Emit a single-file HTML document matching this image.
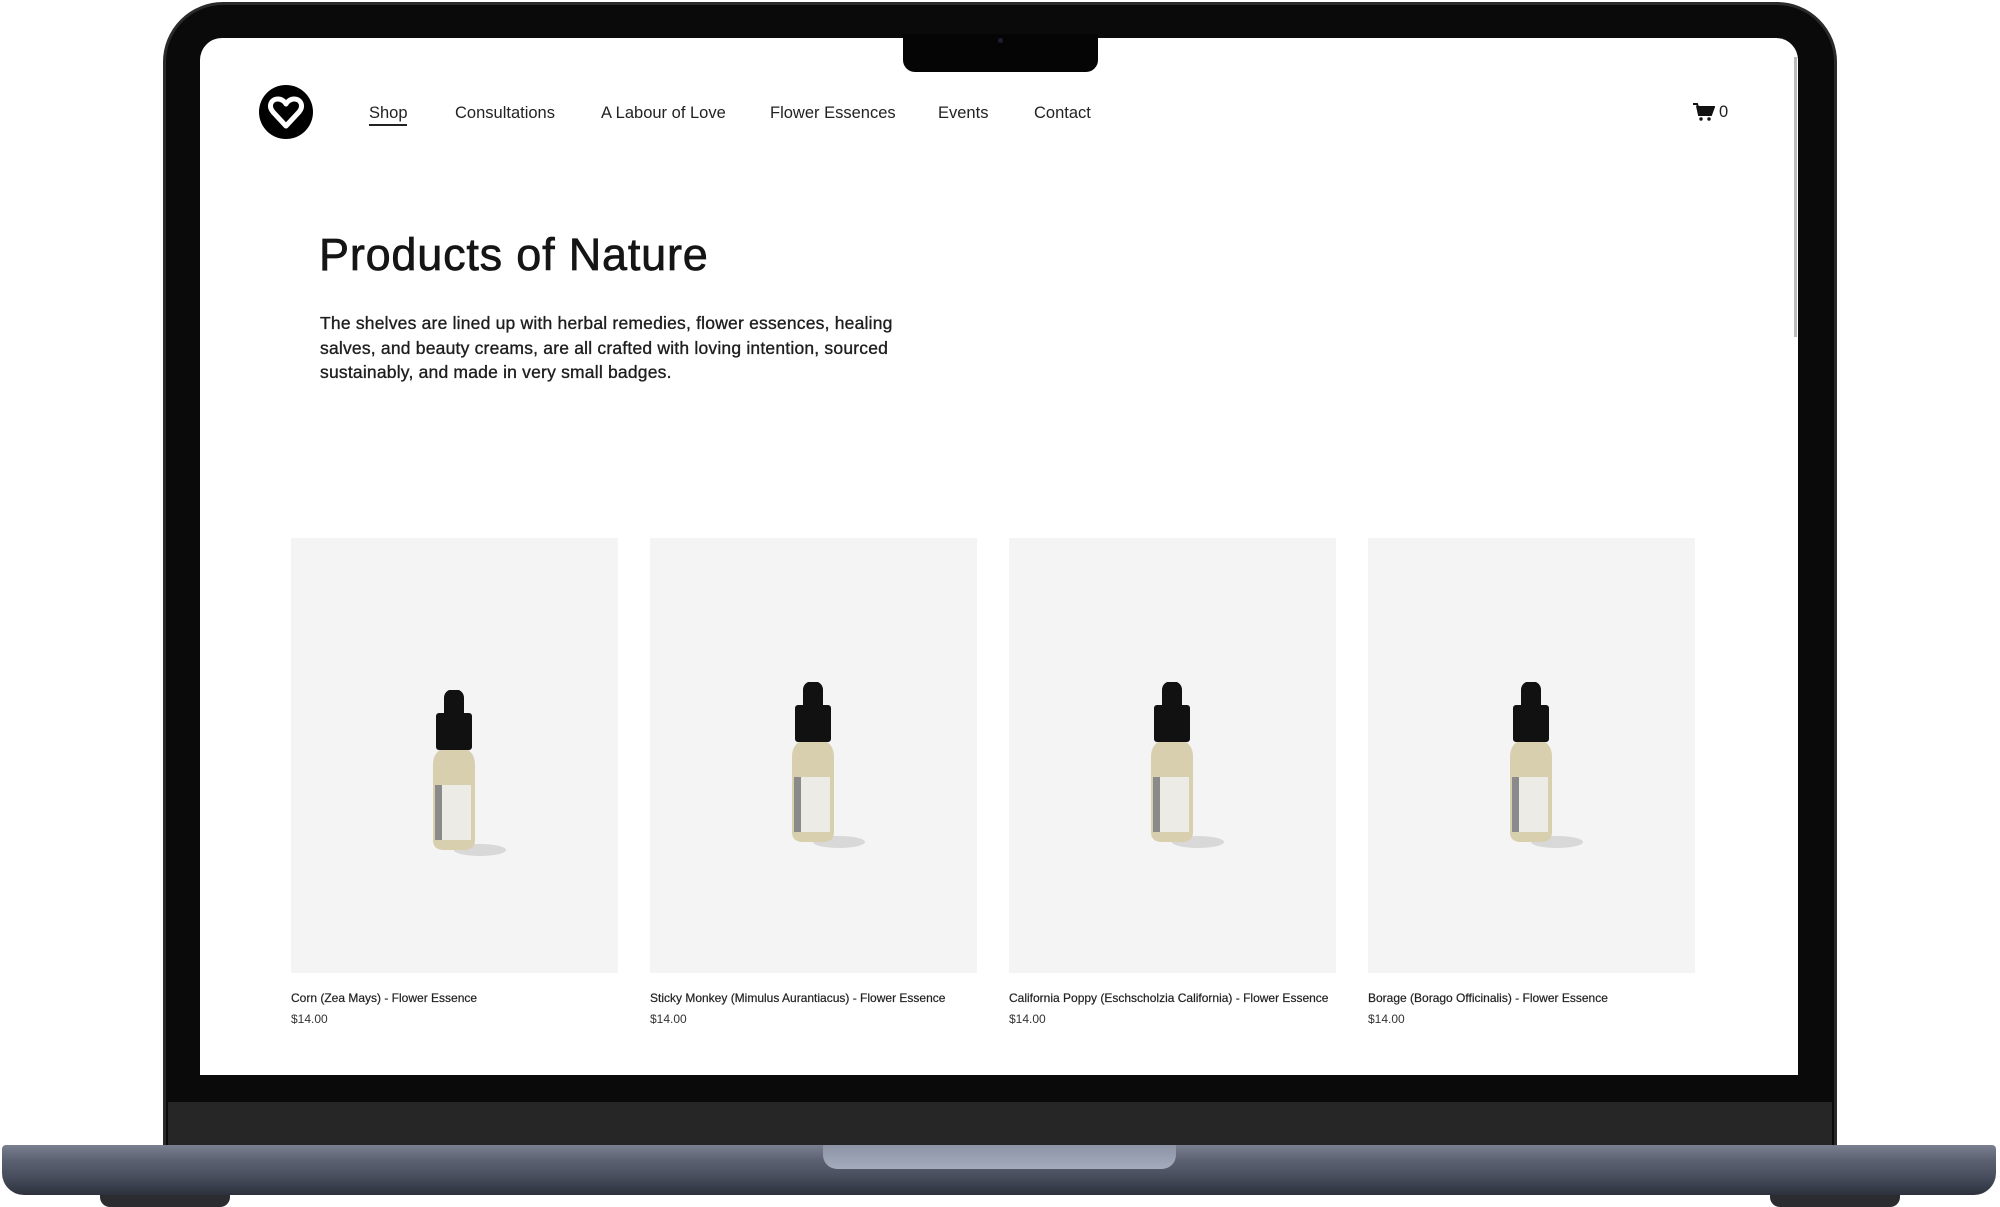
<!DOCTYPE html>
<html><head><meta charset="utf-8"><style>
*{margin:0;padding:0;box-sizing:border-box}
body{width:2000px;height:1207px;background:#fff;position:relative;overflow:hidden;font-family:"Liberation Sans",sans-serif;color:#1a1a1a}
.abs{position:absolute}
.lid{left:163px;top:2px;width:1674px;height:1150px;background:#0a0a0a;border-radius:60px 60px 0 0;border:3px solid #2a2a2a}
.chin{left:168px;top:1102px;width:1664px;height:44px;background:#262626}
.screen{left:200px;top:38px;width:1598px;height:1037px;background:#fff;border-radius:22px 22px 0 0;overflow:hidden}
.notch{left:903px;top:34px;width:195px;height:38px;background:#050505;border-radius:0 0 12px 12px}
.base{left:2px;top:1145px;width:1994px;height:50px;border-radius:4px 4px 22px 22px;background:linear-gradient(#7a8090 0%,#5c6272 30%,#4a5060 60%,#2d313d 100%)}
.thumb{left:823px;top:1145px;width:353px;height:24px;background:linear-gradient(#8c94a6,#a3abbc);border-radius:0 0 14px 14px}
.foot{top:1195px;width:130px;height:12px;background:#2a2c30;border-radius:0 0 10px 10px}
.nav{top:104px;font-size:16.5px;color:#222}
.card{top:538px;width:327px;height:435px;background:#f4f4f4}
.t{font-size:12px;color:#222;top:991px;-webkit-text-stroke:0.2px #222}
.p{font-size:12px;color:#333;top:1012px}
</style></head><body>
<div class="abs lid"></div>
<div class="abs chin"></div>
<div class="abs screen"></div>
<div class="abs notch"><div class="abs" style="left:95px;top:4px;width:5px;height:5px;border-radius:50%;background:#1a2030"></div></div>
<div class="abs" style="left:1794px;top:57px;width:3px;height:280px;background:#bbb"></div>

<svg class="abs" style="left:259px;top:85px" width="54" height="54" viewBox="0 0 54 54"><circle cx="27" cy="27" r="27" fill="#000"/><path d="M27 41 L14 27 C9 21 12 14 19 14 C23 14 26 17 27 19 C28 17 31 14 35 14 C42 14 45 21 40 27 Z" fill="none" stroke="#fff" stroke-width="5" stroke-linejoin="round"/></svg>

<div class="abs nav" style="left:369px">Shop</div>
<div class="abs" style="left:369px;top:124px;width:38px;height:1.5px;background:#222"></div>
<div class="abs nav" style="left:455px">Consultations</div>
<div class="abs nav" style="left:601px">A Labour of Love</div>
<div class="abs nav" style="left:770px">Flower Essences</div>
<div class="abs nav" style="left:938px">Events</div>
<div class="abs nav" style="left:1034px">Contact</div>
<svg class="abs" style="left:1693px;top:103px" width="22" height="18" viewBox="0 0 22 18"><path d="M0 1 H4 L5 4 H21 L18 12 H6 L4 3" fill="none" stroke="#111" stroke-width="2"/><path d="M5 4 H21 L18 12 H7 Z" fill="#111"/><circle cx="8" cy="16" r="1.7" fill="#111"/><circle cx="16" cy="16" r="1.7" fill="#111"/></svg>
<div class="abs nav" style="left:1719px;top:103px">0</div>

<div class="abs" style="left:319px;top:229px;font-size:45px;letter-spacing:0.8px;color:#151515;-webkit-text-stroke:0.7px #151515">Products of Nature</div>
<div class="abs" style="left:320px;top:311px;width:640px;font-size:17.5px;line-height:24.5px;color:#1e1e1e;letter-spacing:0.2px;-webkit-text-stroke:0.35px #1e1e1e">The shelves are lined up with herbal remedies, flower essences, healing<br>salves, and beauty creams, are all crafted with loving intention, sourced<br>sustainably, and made in very small badges.</div>

<div class="abs card" style="left:291px"></div>
<div class="abs card" style="left:650px"></div>
<div class="abs card" style="left:1009px"></div>
<div class="abs card" style="left:1368px"></div>

<svg width="0" height="0" style="position:absolute"><defs>
<g id="b">
<ellipse cx="26" cy="160" rx="26" ry="6" fill="#d8d8d8"/>
<path d="M-14 60 H14 C20 64 21 70 21 76 V150 C21 157 17 160 10 160 H-10 C-17 160 -21 157 -21 150 V76 C-21 70 -20 64 -14 60 Z" fill="#d7cfae"/>
<rect x="-19" y="95" width="36" height="55" fill="#ecebe6"/>
<rect x="-19" y="95" width="7" height="55" fill="#8a8a8a"/>
<rect x="-18" y="23" width="36" height="37" rx="3" fill="#111"/>
<path d="M-10 23 V8 C-10 -4 10 -4 10 8 V23 Z" fill="#111"/>
</g></defs></svg>
<svg class="abs" style="left:394px;top:690px" width="120" height="170" viewBox="-60 0 120 170"><use href="#b"/></svg>
<svg class="abs" style="left:753px;top:682px" width="120" height="170" viewBox="-60 0 120 170"><use href="#b"/></svg>
<svg class="abs" style="left:1112px;top:682px" width="120" height="170" viewBox="-60 0 120 170"><use href="#b"/></svg>
<svg class="abs" style="left:1471px;top:682px" width="120" height="170" viewBox="-60 0 120 170"><use href="#b"/></svg>

<div class="abs t" style="left:291px">Corn (Zea Mays) - Flower Essence</div>
<div class="abs p" style="left:291px">$14.00</div>
<div class="abs t" style="left:650px">Sticky Monkey (Mimulus Aurantiacus) - Flower Essence</div>
<div class="abs p" style="left:650px">$14.00</div>
<div class="abs t" style="left:1009px">California Poppy (Eschscholzia California) - Flower Essence</div>
<div class="abs p" style="left:1009px">$14.00</div>
<div class="abs t" style="left:1368px">Borage (Borago Officinalis) - Flower Essence</div>
<div class="abs p" style="left:1368px">$14.00</div>

<div class="abs base"></div>
<div class="abs thumb"></div>
<div class="abs foot" style="left:100px"></div>
<div class="abs foot" style="left:1770px"></div>
</body></html>
